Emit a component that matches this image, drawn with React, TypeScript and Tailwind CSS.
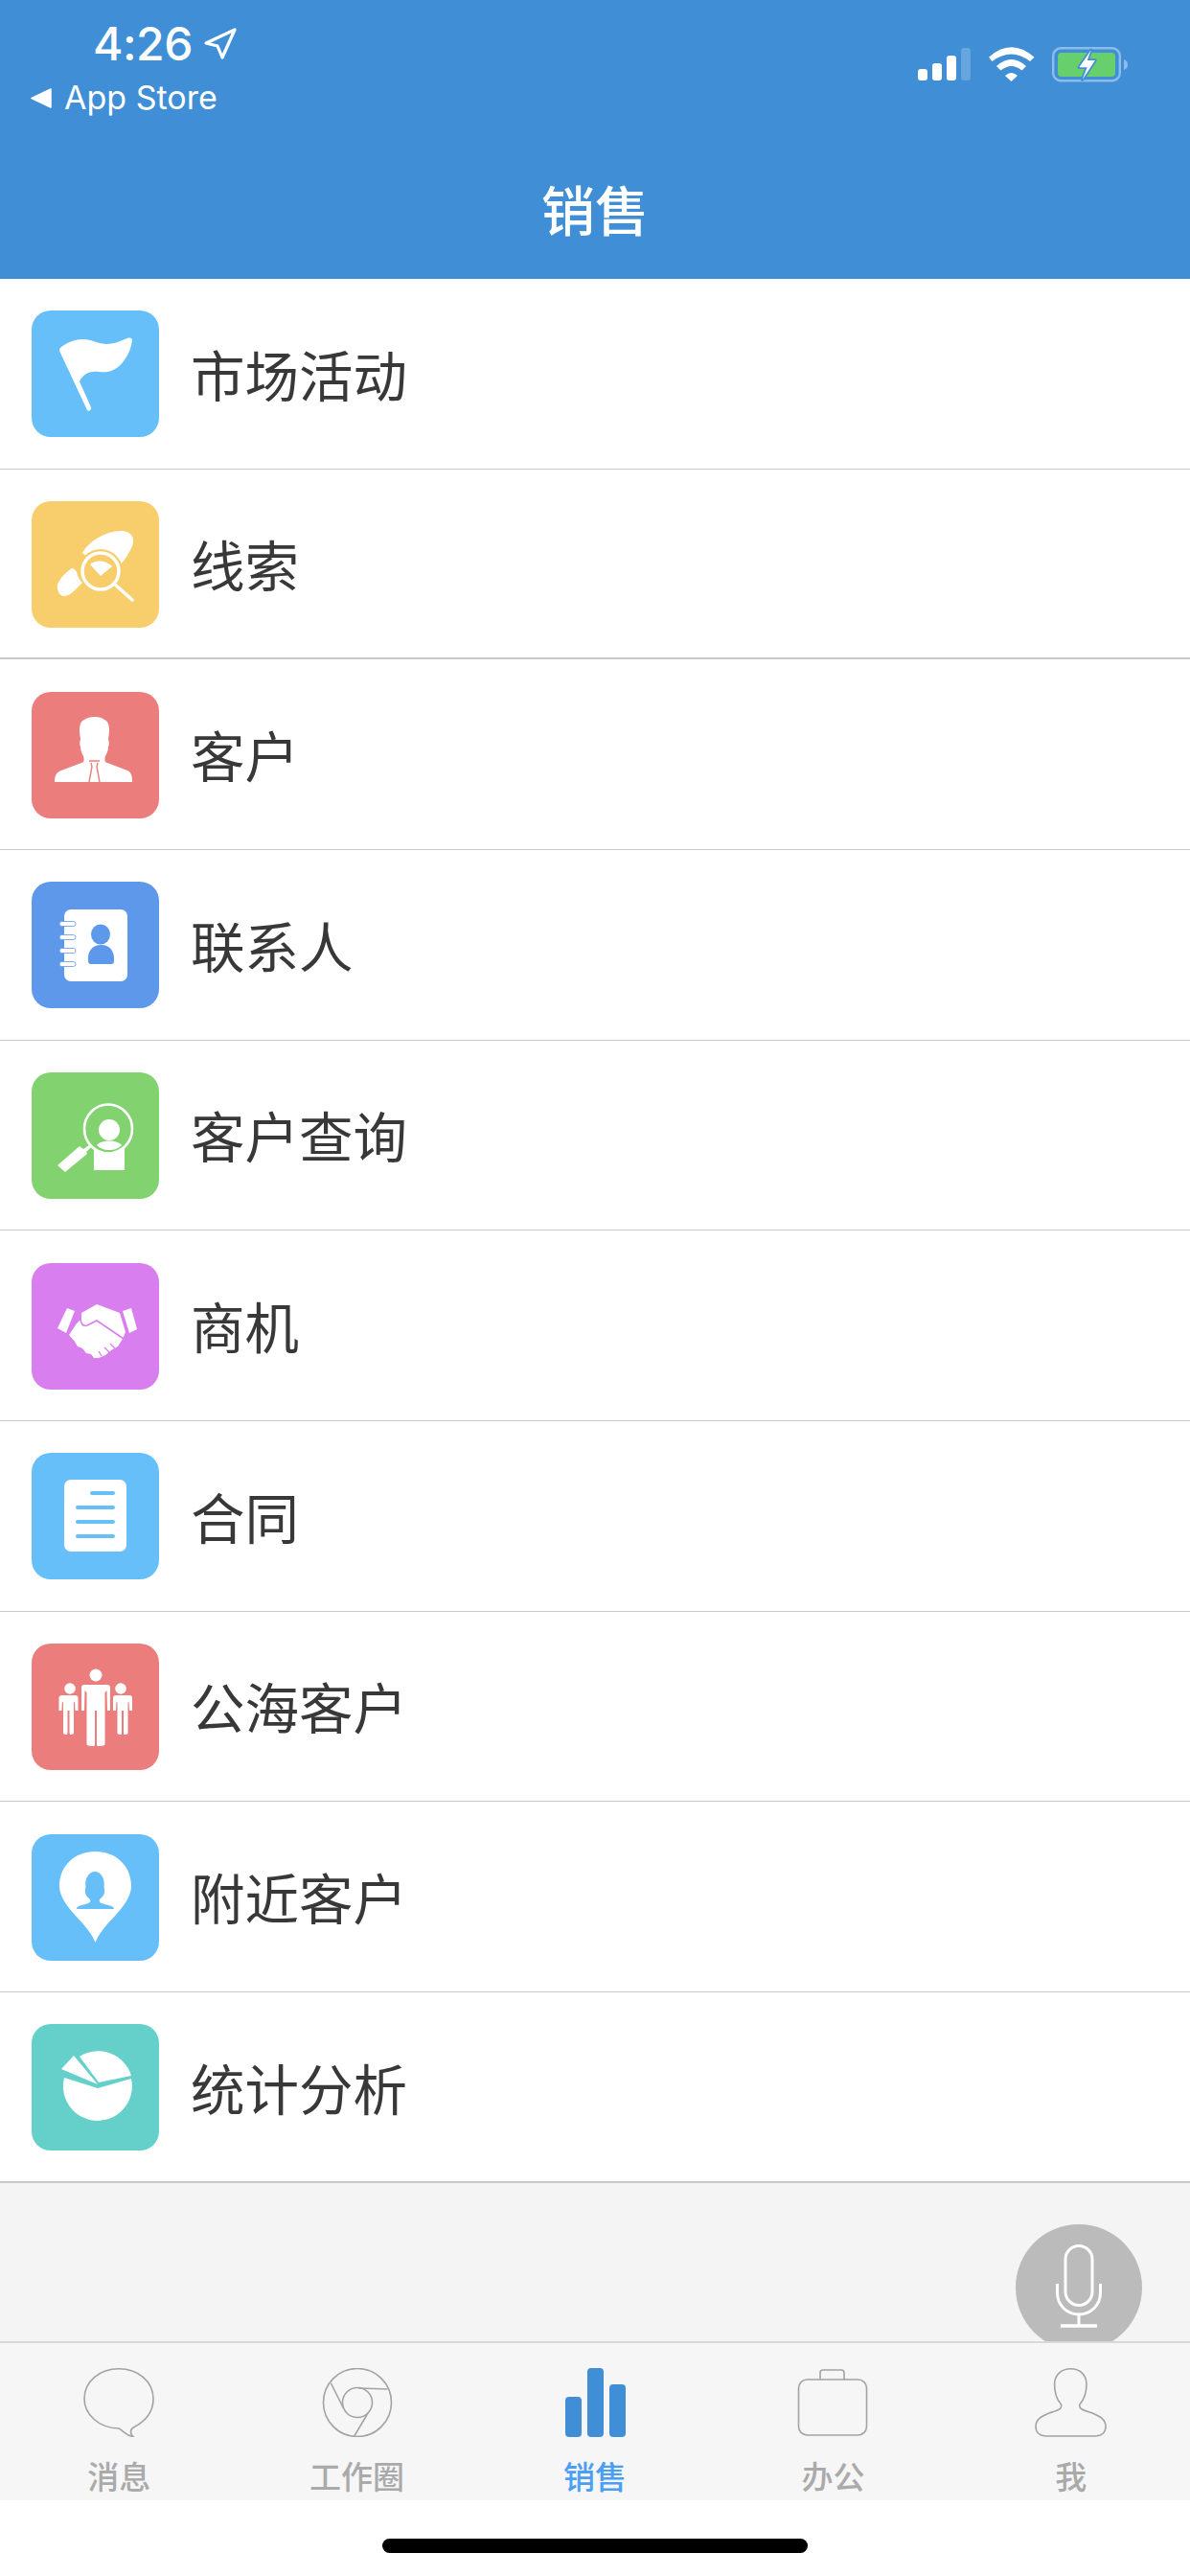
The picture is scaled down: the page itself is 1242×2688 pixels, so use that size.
import React from "react";

const F = '"Noto Sans CJK SC", "Liberation Sans", sans-serif';

function Box({ children }: { children: React.ReactNode }) {
  return (
    <svg viewBox="0 0 133 133" className="w-[133px] h-[133px]">
      {children}
    </svg>
  );
}

function Flag() {
  return (
    <Box>
      <path d="M29 40 C36 33 46 30 54 30 C62 30 70 35 78 35 C88 35 94 31 100 29 C103 28 105 29 105 31 C104 38 102 44 98 50 C93 58 86 63 79 64 C72 65 69 63 63 64 C57 65 52 69 50 74 L62 101 C63 104 59 106 58 104 L29 42 Z" fill="#fff" />
    </Box>
  );
}
function Lead() {
  return (
    <Box>
      <path d="M53 54 C58 43 78 30 95 31 C105 32 108 39 105 47 C102 54 98 60 92 67 L70 68 Z" fill="#fff" />
      <circle cx="72" cy="73" r="23" fill="#f8ce6c" />
      <path d="M27 87 C29 81 36 74 42 70 C44 70 46 72 47 74 C48 79 50 82 53 85 L46 92 C42 96 38 99 34 99 C29 99 26 93 27 87 Z" fill="#fff" />
      <circle cx="72" cy="73" r="19" fill="none" stroke="#fff" strokeWidth="3.5" />
      <path d="M61 66 C66 61 77 61 84 68 L72 78 Z" fill="#fff" />
      <path d="M86 86 L105 103" stroke="#fff" strokeWidth="3.5" strokeLinecap="round" />
    </Box>
  );
}
function Person() {
  return (
    <Box>
      <path d="M24 94 C24 87 26 84 31 82 L52 74 C55 73 55 71 54 67 C52 64 51 60 51 57 C50 56 50 52 51 49 C49 38 50 31 55 29 C60 25 72 25 76 29 C81 31 82 38 80 49 C81 52 81 56 80 57 C80 60 79 64 77 67 C76 71 76 73 79 74 L100 82 C104 84 105 87 105 94 Z" fill="#fff" />
      <path d="M60 94 L63 78 L62 74 M71 94 L68 78 L69 74 M60 72 L71 72" fill="none" stroke="#eb7e7c" strokeWidth="1.4" />
    </Box>
  );
}
function Contacts() {
  return (
    <Box>
      <rect x="34" y="29" width="66" height="75" rx="7" fill="#fff" />
      {[44, 58, 72, 86].map((y) => (
        <rect key={y} x="29" y={y - 2.5} width="17" height="5" rx="2.5" fill="#fff" stroke="#5e98ea" strokeWidth="0.8" />
      ))}
      <ellipse cx="72" cy="55" rx="10" ry="10.5" fill="#5e98ea" />
      <path d="M59 83 C58 73 63 66 72.5 66 C82 66 87 73 86 83 C86 85 85 86 83 86 L62 86 C60 86 59 85 59 83 Z" fill="#5e98ea" />
    </Box>
  );
}
function Query() {
  return (
    <Box>
      <ellipse cx="80" cy="59" rx="25" ry="25.5" fill="none" stroke="#fff" strokeWidth="2.6" />
      <ellipse cx="81" cy="60" rx="11" ry="11" fill="#fff" />
      <path d="M68 76 C72 70 90 70 94 76 C90 80 86 81 81 81 C76 81 72 80 68 76 Z" fill="#fff" />
      <path d="M65 79 C72 85 90 85 97 79 L97 102 L65 102 Z" fill="#fff" />
      <path d="M27 97 L50 77 L54 80 L60 76 L62 78 L57 83 L58 85 L35 104 Z" fill="#fff" />
    </Box>
  );
}
function Handshake() {
  return (
    <Box>
      <path d="M27 68 L37 47 L45 50 L36 73 Z" fill="#fff" />
      <path d="M95 50 L104 47 L110 69 L102 73 Z" fill="#fff" />
      <path d="M52 52 L68 43 L92 52 L98 72 L95 79 L90 87 L83 91 L77 96 L70 99 L65 99 L62 95 L57 94 L53 89 L48 87 L45 82 L39 75 L47 63 L52 58 Z" fill="#fff" />
      <path d="M51 57 C51 63 53 66 58 65 L68 60 L96 79" fill="none" stroke="#d97eee" strokeWidth="1.6" />
      <path d="M82 84 L87 89 M76 88 L81 93 M70 92 L73 97" fill="none" stroke="#d97eee" strokeWidth="1.4" />
    </Box>
  );
}
function Doc() {
  return (
    <Box>
      <rect x="34" y="28" width="65" height="75" rx="7" fill="#fff" />
      {[
        [61, 42],
        [46, 57],
        [46, 72],
        [46, 87],
      ].map(([x, y]) => (
        <rect key={y} x={x} y={y - 2} width={87 - x} height="4" rx="2" fill="#67bffa" />
      ))}
    </Box>
  );
}
function Group() {
  const man = (headX: number, headY: number, r: number, x: number, w: number, top: number, arm: number, bottom: number, leg: number) => {
    const l = x - w / 2;
    return (
      <g key={x} fill="#fff">
        <circle cx={headX} cy={headY} r={r} />
        <path d={`M${l} ${top + 3} Q${l} ${top} ${l + 3} ${top} L${l + w - 3} ${top} Q${l + w} ${top} ${l + w} ${top + 3} L${l + w} ${arm} L${l + w - 3} ${arm} L${l + w - 3.5} ${top + 6} L${x + leg} ${top + 8} L${x + leg} ${bottom - 2} Q${x + leg} ${bottom} ${x + 2} ${bottom} Q${x + 1} ${bottom} ${x + 1} ${bottom - 2} L${x + 1} ${arm} L${x - 1} ${arm} L${x - 1} ${bottom - 2} Q${x - 1} ${bottom} ${x - 2} ${bottom} Q${x - leg} ${bottom} ${x - leg} ${bottom - 2} L${x - leg} ${top + 8} L${l + 3.5} ${top + 6} L${l + 3} ${arm} L${l} ${arm} Z`} />
      </g>
    );
  };
  return (
    <Box>
      {man(67, 33, 6.5, 67, 30, 43, 70, 107, 9.5)}
      {man(40, 47, 5.8, 38.5, 20, 54, 70, 95, 5.5)}
      {man(93, 47, 5.8, 95, 20, 54, 70, 95, 5.5)}
    </Box>
  );
}
function Pin() {
  return (
    <Box>
      <path d="M66.5 18 C88 18 104 33 104 54 C104 64 97 74 88 84 C81 92 72 100 66.5 113 C61 100 52 92 45 84 C36 74 29 64 29 54 C29 33 45 18 66.5 18 Z" fill="#fff" />
      <path d="M47 78 C47 75 52 74 56 73 C60 72 62 71 61 68 C59 66 56 64 56 60 C56 58 56 56 56.5 55 C55 46 60 39 66 39 C72 39 77 46 75.5 55 C76 56 76 58 76 60 C76 64 73 66 71 68 C70 71 72 72 76 73 C80 74 86 75 86 78 Z" fill="#67bffa" />
    </Box>
  );
}
function Pie() {
  return (
    <Box>
      <path d="M31 47 L44 33 L69 63 Z" fill="#fff" />
      <path d="M50 34 A36 36 0 0 1 104 54 L70 61 Z" fill="#fff" />
      <path d="M34 56 L69 67 L104 57 A36 36 0 1 1 34 56 Z" fill="#fff" />
    </Box>
  );
}

const rows: [string, string, React.ReactNode, boolean][] = [
  ["市场活动", "bg-[#67bffa]", <Flag />, false],
  ["线索", "bg-[#f8ce6c]", <Lead />, true],
  ["客户", "bg-[#eb7e7c]", <Person />, false],
  ["联系人", "bg-[#5e98ea]", <Contacts />, false],
  ["客户查询", "bg-[#82d270]", <Query />, false],
  ["商机", "bg-[#d97eee]", <Handshake />, false],
  ["合同", "bg-[#67bffa]", <Doc />, false],
  ["公海客户", "bg-[#eb7e7c]", <Group />, false],
  ["附近客户", "bg-[#67bffa]", <Pin />, false],
  ["统计分析", "bg-[#65d0c9]", <Pie />, true],
];

function TabIcon({ children }: { children: React.ReactNode }) {
  return (
    <svg viewBox="0 0 90 72" className="w-[90px] h-[72px]" fill="none" stroke="#a3a3a3" strokeWidth="1.6">
      {children}
    </svg>
  );
}

const tabs: [string, React.ReactNode, boolean][] = [
  [
    "消息",
    <TabIcon>
      <path d="M45.5 63 C24 63 9 48 9 32 C9 14 25 0.8 45 0.8 C65 0.8 81 14 81 32 C81 45 73 55 62 61 C57 63 56 68 60 71.5 C54 71 50 67 45.5 63 Z" />
    </TabIcon>,
    false,
  ],
  [
    "工作圈",
    <TabIcon>
      <circle cx="45" cy="36" r="35.5" />
      <circle cx="45" cy="36" r="15.5" />
      <path d="M17.5 16 L30.5 42 M46 21 L76.5 22 M56 47 L41.5 71.5" />
    </TabIcon>,
    false,
  ],
  [
    "销售",
    <svg viewBox="0 0 90 72" className="w-[90px] h-[72px]" fill="#408fd6">
      <rect x="14" y="30" width="17" height="42" rx="4" />
      <rect x="37" y="0" width="17" height="72" rx="4" />
      <rect x="60" y="17" width="17" height="55" rx="4" />
    </svg>,
    true,
  ],
  [
    "办公",
    <TabIcon>
      <rect x="9.5" y="12" width="71" height="58" rx="9" />
      <path d="M32 12 L32 5 C32 3 33 2 35 2 L54 2 C56 2 57 3 57 5 L57 12" />
    </TabIcon>,
    false,
  ],
  [
    "我",
    <TabIcon>
      <path d="M19 71 C12 71 8 67 8 61 C8 53 15 50 22 47 C31 44 36 43 34.5 38 C30 33 27.6 26 27.6 17 C27.6 7 35 0.8 44.5 0.8 C54 0.8 61 7 61 17 C61 26 58 33 54 38 C52.5 43 58 44 67 47 C74 50 81 53 81 61 C81 67 77 71 70 71 Z" />
    </TabIcon>,
    false,
  ],
];

export default function App() {
  return (
    <div className="w-[1242px] h-[2688px] bg-white flex flex-col overflow-hidden" style={{ fontFamily: F }}>
      <header className="relative h-[291px] shrink-0 bg-[#408fd6] text-white">
        <span className="absolute left-[97px] top-[18px] text-[48px] leading-[56px] font-medium tracking-[-0.5px]" style={{ fontFamily: '"Inter", sans-serif' }}>
          4:26
        </span>
        <svg viewBox="0 0 40 40" className="absolute left-[210px] top-[27px] w-[40px] h-[40px]" fill="none" stroke="#fff" strokeWidth="3.2" strokeLinejoin="round">
          <path d="M5 18 L35 4 L22 33 L17 21 Z" />
        </svg>
        <svg viewBox="0 0 22 21" className="absolute left-[32px] top-[92px] w-[22px] h-[21px]" fill="#fff" stroke="#fff" strokeWidth="1.5" strokeLinejoin="round">
          <path d="M21 1 L21 20 L1 10.5 Z" />
        </svg>
        <span className="absolute left-[67px] top-[81px] text-[34px] leading-[42px]" style={{ fontFamily: '"Inter", sans-serif' }}>
          App Store
        </span>
        <svg viewBox="0 0 57 36" className="absolute left-[957px] top-[49px] w-[57px] h-[36px]" fill="#fff">
          <rect x="1" y="23" width="10" height="12" rx="3" />
          <rect x="16" y="17" width="10" height="18" rx="3" />
          <rect x="31" y="9" width="10" height="26" rx="3" />
          <rect x="46" y="1" width="10" height="34" rx="3" opacity="0.2" />
        </svg>
        <svg viewBox="0 0 48 36" className="absolute left-[1032px] top-[49px] w-[48px] h-[36px]" fill="#fff">
          <path d="M0 10.7 Q23.5 -10 47.5 10.7 L43 15 Q23.5 0 3.5 15 Z" />
          <path d="M8 20 Q23.5 6 39 20 L34.5 24.5 Q23.5 15.5 12.5 24.5 Z" />
          <path d="M17 30 Q23.5 24 30 30 L23.5 36 Z" />
        </svg>
        <svg viewBox="0 0 80 38" className="absolute left-[1098px] top-[49px] w-[80px] h-[38px]">
          <rect x="1.2" y="1.2" width="69.6" height="34" rx="8" fill="none" stroke="#8cbcea" strokeWidth="2.4" />
          <rect x="6" y="6" width="60" height="25" rx="4" fill="#67d06c" />
          <path d="M75 13 C78 14 79 16 79 18.5 C79 21 78 23 75 24 Z" fill="#8cbcea" />
          <path d="M40.7 3.3 L28.3 21.3 L36.7 21.3 L31.7 34 L45 14 L36.7 14 Z" fill="#fff" stroke="#408fd6" strokeWidth="3.5" paintOrder="stroke" strokeLinejoin="round" />
        </svg>
        <h1 className="absolute left-0 right-0 top-[177px] text-center text-[56px] leading-[80px] font-medium">销售</h1>
      </header>

      <main className="relative flex-1 bg-[#f4f4f4]">
        <ul className="bg-white">
          {rows.map(([label, bg, icon, strong]) => (
            <li
              key={label}
              className={`h-[198.67px] flex items-center pl-[33px] box-border ${strong ? "border-b-2 border-[#c8c7cc] pt-[2px]" : "border-b border-[#c8c8c8] pt-[1px]"}`}
            >
              <div className={`w-[133px] h-[132px] rounded-[20px] overflow-hidden shrink-0 ${bg}`}>{icon}</div>
              <span className="ml-[33px] mb-[3px] text-[56.5px] leading-[80px] text-[#383838]">{label}</span>
            </li>
          ))}
        </ul>
        <button className="absolute right-[50px] top-[2030px] w-[132px] h-[132px] rounded-full bg-[#bbbbbb] flex items-start justify-center">
          <svg viewBox="0 0 50 90" className="w-[50px] h-[90px] mt-[19px]" fill="none" stroke="#fff" strokeWidth="3">
            <rect x="11" y="3.5" width="28" height="62" rx="14" />
            <path d="M2.5 43 L2.5 52 C2.5 66 13 75 25 75 C37 75 47.5 66 47.5 52 L47.5 43" />
            <path d="M25 75 L25 86" />
            <path d="M6 87 L44 87" strokeWidth="3.5" />
          </svg>
        </button>
      </main>

      <nav className="relative h-[166px] shrink-0 bg-[#f6f6f6] border-t-2 border-[#d9d9d9] grid grid-cols-5 pt-[26px] box-border">
        {tabs.map(([label, icon, active]) => (
          <div key={label} className="flex flex-col items-center">
            {icon}
            <span className={`mt-[20px] text-[33px] leading-[40px] font-medium ${active ? "text-[#4a9ff5]" : "text-[#aaaaaa]"}`}>{label}</span>
          </div>
        ))}
      </nav>
      <div className="h-[79px] shrink-0 bg-white flex justify-center pt-[40px]">
        <div className="w-[444px] h-[15px] rounded-full bg-black" />
      </div>
    </div>
  );
}
